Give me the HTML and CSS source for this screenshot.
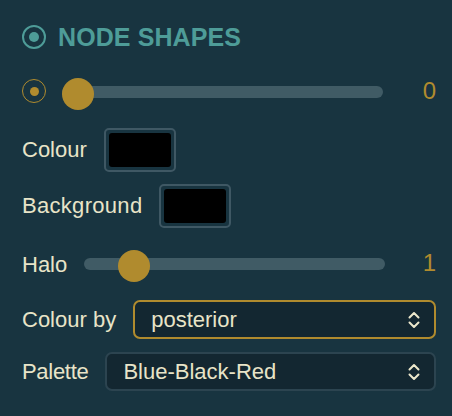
FILE: index.html
```html
<!DOCTYPE html>
<html>
<head>
<meta charset="utf-8">
<link rel="stylesheet" href="styles.css">
</head>
<body>
<div class="panel">
  <div class="row header">
    <span class="radio radio-teal"><span class="dot"></span></span>
    <span class="title">NODE SHAPES</span>
  </div>
  <div class="row slider-row">
    <span class="radio radio-gold small"><span class="dot"></span></span>
    <div class="slider s1">
      <div class="track"></div>
      <div class="thumb" style="left:0px"></div>
    </div>
    <span class="value">0</span>
  </div>
  <div class="row swatch-row r-colour">
    <span class="label">Colour</span>
    <span class="swatch"><span class="fill"></span></span>
  </div>
  <div class="row swatch-row r-bg">
    <span class="label wide">Background</span>
    <span class="swatch"><span class="fill"></span></span>
  </div>
  <div class="row slider-row r-halo">
    <span class="label">Halo</span>
    <div class="slider s2">
      <div class="track"></div>
      <div class="thumb" style="left:34px"></div>
    </div>
    <span class="value v2">1</span>
  </div>
  <div class="row select-row r-colourby">
    <span class="label">Colour by</span>
    <div class="select active">
      <span class="sel-text">posterior</span>
      <svg class="chev" width="12" height="20" viewBox="0 0 12 20"><polyline points="1.5,7.5 6,3 10.5,7.5" fill="none" stroke="#ece8cc" stroke-width="2" stroke-linecap="round" stroke-linejoin="round"/><polyline points="1.5,12.5 6,17 10.5,12.5" fill="none" stroke="#ece8cc" stroke-width="2" stroke-linecap="round" stroke-linejoin="round"/></svg>
    </div>
  </div>
  <div class="row select-row r-palette">
    <span class="label narrow">Palette</span>
    <div class="select">
      <span class="sel-text">Blue-Black-Red</span>
      <svg class="chev" width="12" height="20" viewBox="0 0 12 20"><polyline points="1.5,7.5 6,3 10.5,7.5" fill="none" stroke="#ece8cc" stroke-width="2" stroke-linecap="round" stroke-linejoin="round"/><polyline points="1.5,12.5 6,17 10.5,12.5" fill="none" stroke="#ece8cc" stroke-width="2" stroke-linecap="round" stroke-linejoin="round"/></svg>
    </div>
  </div>
</div>
</body>
</html>
```
FILE: styles.css
```css
html, body {
  margin: 0;
  padding: 0;
  background: #183440;
  width: 452px;
  height: 416px;
  overflow: hidden;
}
.panel {
  display: flex;
  flex-direction: column;
  padding: 25px 16px 0 22px;
  font-family: "Liberation Sans", Arial, sans-serif;
  color: #ece8cc;
}
.row {
  display: flex;
  align-items: center;
}
.header {
  height: 24px;
}
.radio {
  width: 24px;
  height: 24px;
  box-sizing: border-box;
  border-radius: 50%;
  display: flex;
  align-items: center;
  justify-content: center;
  flex: none;
}
.radio-teal {
  border: 2px solid #4e9c98;
}
.radio-teal .dot {
  width: 10px;
  height: 10px;
  border-radius: 50%;
  background: #4e9c98;
}
.radio-gold {
  border: 1.5px solid #b08b2e;
}
.radio-gold .dot {
  width: 9px;
  height: 9px;
  border-radius: 50%;
  background: #b08b2e;
}
.title {
  margin-left: 12px;
  font-size: 25px;
  font-weight: bold;
  color: #4e9c98;
  letter-spacing: 0.1px;
}
.slider-row {
  height: 32px;
  margin-top: 28px;
}
.slider-row .radio {
  margin-top: -4px;
}
.slider {
  position: relative;
  height: 32px;
  flex: none;
}
.s1 {
  width: 321px;
  margin-left: 16px;
}
.s2 {
  width: 301px;
  margin-left: 17px;
}
.track {
  position: absolute;
  left: 0;
  right: 0;
  top: 9px;
  height: 12px;
  border-radius: 6px;
  background: #405b65;
}
.thumb {
  position: absolute;
  top: 1px;
  width: 32px;
  height: 32px;
  border-radius: 50%;
  background: #b08b2e;
}
.value {
  flex: 1;
  text-align: right;
  font-size: 24px;
  color: #b08b2e;
  margin-top: -4px;
}
.label {
  font-size: 22px;
  color: #e8e4c8;
}
.label.wide {
  letter-spacing: 0.3px;
}
.label.narrow {
  letter-spacing: -0.3px;
}
.swatch-row {
  height: 44px;
}
.r-colour {
  margin-top: 19px;
}
.r-bg {
  margin-top: 12px;
}
.swatch {
  margin-left: 17px;
  width: 72px;
  height: 44px;
  box-sizing: border-box;
  border: 2px solid #3f5864;
  border-radius: 5px;
  padding: 3px;
  display: flex;
}
.swatch .fill {
  flex: 1;
  background: #000;
  border-radius: 3px;
}
.r-halo {
  margin-top: 21px;
}
.select-row {
  height: 39px;
}
.r-colourby {
  margin-top: 19px;
}
.r-palette {
  margin-top: 13px;
}
.select {
  margin-left: 17px;
  flex: 1;
  height: 39px;
  box-sizing: border-box;
  border: 2px solid #2c4450;
  border-radius: 7px;
  background: #132731;
  display: flex;
  align-items: center;
  padding: 0 14px 0 16px;
}
.select.active {
  border-color: #b08b2e;
}
.sel-text {
  flex: 1;
  font-size: 22px;
  color: #e8e4c8;
}
.chev {
  flex: none;
}
```
